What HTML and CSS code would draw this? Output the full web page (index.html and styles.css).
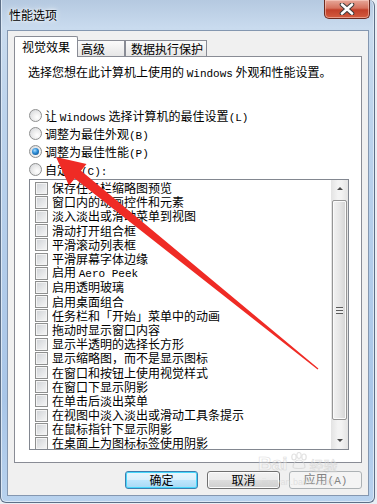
FILE: index.html
```html
<!DOCTYPE html>
<html lang="zh-CN">
<head>
    <meta charset="UTF-8">
    <meta name="viewport" content="width=device-width, initial-scale=1.0">
    <title>性能选项</title>
    <link rel="stylesheet" href="styles.css">
</head>
<body>
<div class="window">
    <!-- title bar -->
    <div class="titlebar">
        <span class="title">性能选项</span>
        <div class="close-btn">
            <svg width="16" height="12" viewBox="0 0 16 12">
                <path d="M3 1.5 L13 10.5 M13 1.5 L3 10.5" stroke="#3b3b3b" stroke-width="4.6" stroke-linecap="round"/>
                <path d="M3 1.5 L13 10.5 M13 1.5 L3 10.5" stroke="#ffffff" stroke-width="2.6" stroke-linecap="round"/>
            </svg>
        </div>
    </div>

    <div class="client">
        <!-- tabs -->
        <div class="tabs">
            <div class="tab active">视觉效果</div>
            <div class="tab tab-adv">高级</div>
            <div class="tab tab-dep">数据执行保护</div>
        </div>

        <div class="panel">
            <p class="intro">选择您想在此计算机上使用的 <span class="en">Windows</span> 外观和性能设置。</p>

            <div class="radios">
                <div class="radio-row"><span class="radio"></span><span>让 <span class="en">Windows</span> 选择计算机的最佳设置<span class="en">(L)</span></span></div>
                <div class="radio-row"><span class="radio"></span><span>调整为最佳外观<span class="en">(B)</span></span></div>
                <div class="radio-row"><span class="radio checked"></span><span>调整为最佳性能<span class="en">(P)</span></span></div>
                <div class="radio-row"><span class="radio"></span><span>自定义<span class="en">(C):</span></span></div>
            </div>

            <div class="listbox">
                <div class="list-items" id="listItems"></div>
                <div class="scrollbar">
                    <div class="sb-btn"><span class="tri-up"></span></div>
                    <div class="sb-track">
                        <div class="sb-thumb">
                            <div class="grip"></div>
                        </div>
                    </div>
                    <div class="sb-btn"><span class="tri-down"></span></div>
                </div>
            </div>
        </div>

        <!-- buttons -->
        <div class="buttons">
            <button class="btn default">确定</button>
            <button class="btn">取消</button>
            <button class="btn disabled">应用<span class="en">(A)</span></button>
        </div>
    </div>
</div>

<!-- red arrow drawn over the dialog -->
<svg class="arrow" width="377" height="504" viewBox="0 0 377 504">
    <polygon points="56,157 86.5,164 81,170.7 318.4,368.5 317.6,369.5 74.7,178.5 69,185.5" fill="#ef2b25"/>
</svg>

<!-- baidu watermark -->
<div class="watermark">
    <div class="wm-top">
        <span class="wm-bai">Bai</span>
        <svg class="wm-paw" width="20" height="18" viewBox="0 0 20 18">
            <g fill="none" stroke="#cfcfcf" stroke-width="1.2">
                <ellipse cx="5" cy="5" rx="2.2" ry="3"/>
                <ellipse cx="10" cy="3.5" rx="2.2" ry="3"/>
                <ellipse cx="15" cy="5" rx="2.2" ry="3"/>
                <path d="M4 15 C4 10 8 8 10 8 C12 8 16 10 16 15 C16 17 4 17 4 15 Z"/>
            </g>
        </svg>
        <span class="wm-jy">经验</span>
    </div>
    <div class="wm-url">jingyan.baidu.com</div>
</div>

<script>
    const items = [
        "保存任务栏缩略图预览",
        "窗口内的动画控件和元素",
        "淡入淡出或滑动菜单到视图",
        "滑动打开组合框",
        "平滑滚动列表框",
        "平滑屏幕字体边缘",
        "启用 <span class='en'>Aero Peek</span>",
        "启用透明玻璃",
        "启用桌面组合",
        "任务栏和「开始」菜单中的动画",
        "拖动时显示窗口内容",
        "显示半透明的选择长方形",
        "显示缩略图，而不是显示图标",
        "在窗口和按钮上使用视觉样式",
        "在窗口下显示阴影",
        "在单击后淡出菜单",
        "在视图中淡入淡出或滑动工具条提示",
        "在鼠标指针下显示阴影",
        "在桌面上为图标标签使用阴影"
    ];

    const listItems = document.getElementById('listItems');
    items.forEach((text) => {
        let row = document.createElement('div');
        row.classList.add('item');
        row.innerHTML = `<span class="check"></span><span>${text}</span>`;
        listItems.appendChild(row);
    });
</script>
</body>
</html>
```

FILE: styles.css
```css
body {
    margin: 0;
    width: 377px;
    height: 504px;
    overflow: hidden;
    position: relative;
    background: #e9eef4;
    font-family: "Noto Sans CJK SC", sans-serif;
    font-size: 12px;
    color: #000;
}
.en {
    font-family: "Liberation Mono", "Noto Sans CJK SC", monospace;
    font-size: 11px;
}
.window {
    width: 375px;
    height: 503px;
    box-sizing: border-box;
    padding: 0 5px 6px 6px;
    display: flex;
    flex-direction: column;
    border: 1px solid #5d6f87;
    border-top: none;
    border-radius: 0 6px 6px 6px;
    background: linear-gradient(to bottom, #b5c9e0 0px, #c9dbee 28px, #bcd3ec 120px, #a9c6e8 400px, #b8d2ee 100%);
    box-shadow: inset 1px 0 0 #dce8f5, inset -1px 0 0 #dce8f5, inset 0 -1px 0 #dce8f5;
}
.titlebar {
    height: 30px;
    display: flex;
    justify-content: space-between;
    align-items: flex-start;
}
.title {
    margin-top: 7px;
    padding-left: 2px;
    line-height: 16px;
    text-shadow: 0 0 6px #ffffff, 0 0 3px #ffffff;
}
.close-btn {
    width: 46px;
    height: 19px;
    box-sizing: border-box;
    margin-right: -1px;
    display: flex;
    align-items: center;
    justify-content: center;
    border: 1px solid #6b2a1f;
    border-top: none;
    border-radius: 0 0 5px 5px;
    background: linear-gradient(to bottom, #e7a89a 0%, #d6725e 45%, #c2402a 55%, #d35c3f 100%);
    box-shadow: inset 0 0 0 1px rgba(255, 220, 210, 0.5);
}
.client {
    height: 466px;
    box-sizing: border-box;
    border: 1px solid #8497b0;
    background: #f0f0f0;
    padding: 5px 6px 0 6px;
    display: flex;
    flex-direction: column;
}
.tabs {
    height: 20px;
    display: flex;
    align-items: flex-end;
}
.tab {
    height: 16px;
    box-sizing: border-box;
    border: 1px solid #898c95;
    border-bottom: none;
    background: linear-gradient(to bottom, #fbfbfb, #e6e6e6);
    line-height: 16px;
    white-space: nowrap;
}
.tab.active {
    height: 21px;
    margin-bottom: -1px;
    padding: 0 7px;
    background: #fff;
    position: relative;
    z-index: 1;
    line-height: 20px;
    border-radius: 2px 2px 0 0;
}
.tab-adv {
    width: 47px;
    padding-left: 3px;
    border-left: none;
}
.tab-dep {
    width: 82px;
    padding-left: 5px;
}
.panel {
    width: 348px;
    height: 407px;
    box-sizing: border-box;
    border: 1px solid #898c95;
    background: #fff;
    padding: 8px 12px 0 14px;
}
.intro {
    margin: 0 0 0 -1px;
    line-height: 14px;
    white-space: nowrap;
}
.radios {
    margin-top: 25px;
}
.radio-row {
    height: 18px;
    display: flex;
    align-items: center;
    white-space: nowrap;
}
.radio {
    width: 13px;
    height: 13px;
    box-sizing: border-box;
    margin-right: 3px;
    border-radius: 50%;
    border: 1px solid #8e8f8f;
    background: radial-gradient(circle at 65% 65%, #ffffff 0%, #eeeeee 40%, #cfd2d6 100%);
    position: relative;
}
.radio.checked::after {
    content: "";
    position: absolute;
    left: 2px;
    top: 2px;
    width: 7px;
    height: 7px;
    border-radius: 50%;
    background: radial-gradient(circle at 40% 35%, #a8dcff 0%, #2a8ad4 45%, #0b3f75 100%);
}
.listbox {
    margin-top: 1px;
    height: 271px;
    box-sizing: border-box;
    border: 1px solid #828790;
    display: flex;
}
.list-items {
    flex: 1;
    overflow: hidden;
    padding: 1px 0 0 5px;
}
.item {
    height: 14.2px;
    display: flex;
    align-items: center;
    white-space: nowrap;
    line-height: 14px;
}
.check {
    width: 13px;
    height: 13px;
    box-sizing: border-box;
    margin-right: 4px;
    flex-shrink: 0;
    border: 1px solid #8e8f8f;
    background: linear-gradient(135deg, #cfd2d6, #f7f7f7);
    box-shadow: inset 0 0 0 1px #f4f4f4;
}
.scrollbar {
    width: 17px;
    display: flex;
    flex-direction: column;
    background: linear-gradient(to right, #e3e3e3, #f3f3f3 40%, #f3f3f3 60%, #e3e3e3);
}
.sb-btn {
    height: 17px;
    display: flex;
    align-items: center;
    justify-content: center;
}
.tri-up {
    border-left: 3px solid transparent;
    border-right: 3px solid transparent;
    border-bottom: 3px solid #4b4b4b;
}
.tri-down {
    border-left: 3px solid transparent;
    border-right: 3px solid transparent;
    border-top: 3px solid #4b4b4b;
}
.sb-track {
    flex: 1;
    padding-top: 3px;
}
.sb-thumb {
    height: 220px;
    margin: 0 1px;
    box-sizing: border-box;
    border: 1px solid #959595;
    border-radius: 2px;
    background: linear-gradient(to right, #f2f2f2, #e6e6e6 50%, #d4d4d4);
    box-shadow: inset 0 0 0 1px #fafafa;
    display: flex;
    align-items: center;
    justify-content: center;
}
.grip {
    width: 7px;
    height: 7px;
    background: repeating-linear-gradient(to bottom, #5c5c5c 0px, #5c5c5c 1px, #eeeeee 1px, #eeeeee 3px);
}
.buttons {
    margin-top: 8px;
    display: flex;
    justify-content: flex-end;
    gap: 9px;
}
.btn {
    width: 73px;
    height: 18px;
    box-sizing: border-box;
    border: 1px solid #707070;
    border-radius: 3px;
    background: linear-gradient(to bottom, #f2f2f2 0%, #ebebeb 50%, #dddddd 51%, #cfcfcf 100%);
    box-shadow: inset 0 0 0 1px #fcfcfc;
    font-family: "Noto Sans CJK SC", sans-serif;
    font-size: 12px;
    line-height: 14px;
    padding: 0;
    color: #000;
}
.btn.default {
    border-color: #3c7fb1;
    background: linear-gradient(to bottom, #eaf6fd 0%, #d9f0fc 50%, #bee6fd 51%, #a7d9f5 100%);
    box-shadow: inset 0 0 0 1px #48d8fb;
}
.btn.disabled {
    border-color: #adb2b5;
    background: #f4f4f4;
    box-shadow: none;
    color: #838383;
}
.arrow {
    position: absolute;
    left: 0;
    top: 0;
    pointer-events: none;
}
.watermark {
    position: absolute;
    left: 258px;
    top: 452px;
    opacity: 0.6;
    pointer-events: none;
}
.wm-top {
    display: flex;
    align-items: flex-end;
}
.wm-bai {
    font-family: "Liberation Sans", sans-serif;
    font-weight: bold;
    font-size: 19px;
    line-height: 20px;
    color: rgba(255, 255, 255, 0.6);
    -webkit-text-stroke: 0.6px #c8c8c8;
}
.wm-paw {
    margin: 0 1px 4px 1px;
}
.wm-jy {
    font-size: 14px;
    line-height: 18px;
    color: rgba(255, 255, 255, 0.6);
    -webkit-text-stroke: 0.5px #c8c8c8;
}
.wm-url {
    font-family: "Liberation Sans", sans-serif;
    font-size: 9px;
    line-height: 10px;
    margin-top: 3px;
    margin-left: 4px;
    color: #d4d4d4;
}
```
